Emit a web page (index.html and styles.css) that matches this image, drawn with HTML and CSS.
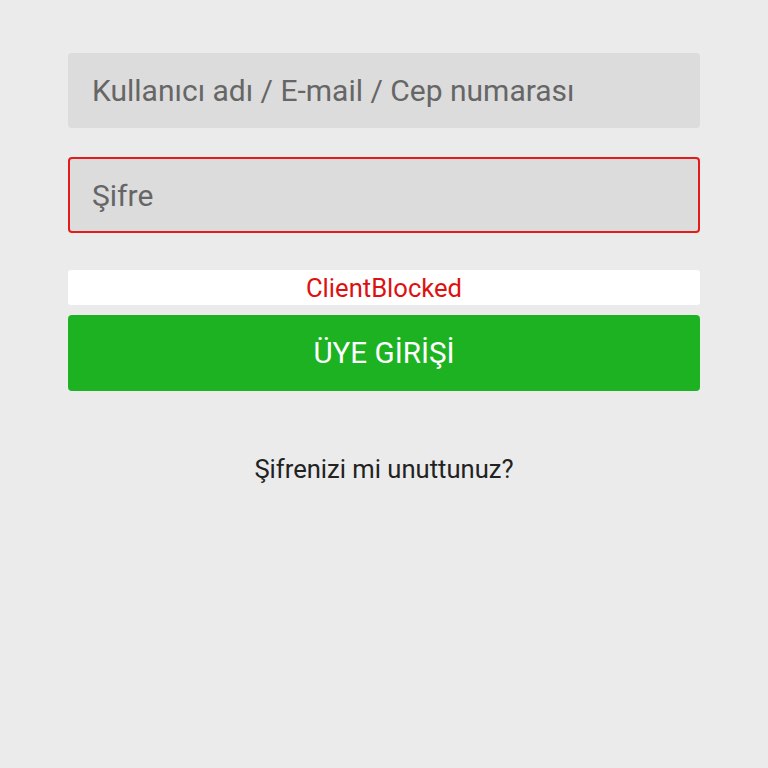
FILE: index.html
```html
<!DOCTYPE html>
<html lang="tr">
<head>
<meta charset="utf-8">
<link rel="stylesheet" href="styles.css">
</head>
<body>
<main class="login">
  <div class="field">Kullanıcı adı / E-mail / Cep numarası</div>
  <div class="field field-error">Şifre</div>
  <div class="message">ClientBlocked</div>
  <button class="submit">ÜYE GİRİŞİ</button>
  <div class="forgot">Şifrenizi mi unuttunuz?</div>
</main>
</body>
</html>
```

FILE: styles.css
```css
html, body {
  margin: 0;
  padding: 0;
  background: #ebebeb;
  font-family: Roboto, "Noto Sans", sans-serif;
}
.login {
  width: 632px;
  margin: 0 auto;
  padding-top: 53px;
  display: flex;
  flex-direction: column;
}
.field {
  box-sizing: border-box;
  height: 75px;
  background: #dcdcdc;
  border-radius: 4px;
  display: flex;
  align-items: center;
  font-size: 30px;
  color: #666;
  border: 2px solid transparent;
  padding-left: 22px;
}
.field + .field {
  margin-top: 29px;
  height: 76px;
}
.field-error {
  border-color: #e31b1b;
}
.message {
  margin-top: 37px;
  height: 35px;
  background: #fff;
  border-radius: 3px;
  display: flex;
  align-items: center;
  justify-content: center;
  font-size: 25.6px;
  color: #dd1111;
}
.submit {
  margin-top: 10px;
  height: 76px;
  border: none;
  border-radius: 4px;
  background: #1db222;
  color: #fff;
  font-family: Roboto, "Noto Sans", sans-serif;
  font-size: 29.6px;
  padding: 0;
}
.forgot {
  margin-top: 63px;
  text-align: center;
  font-size: 25.6px;
  color: #222;
}
```
